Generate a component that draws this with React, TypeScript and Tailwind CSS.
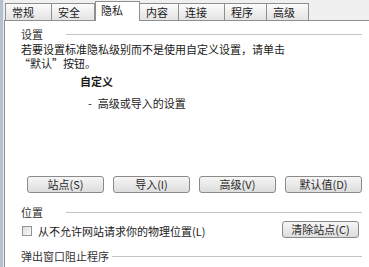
const tabs = [
  { label: "常规", w: "w-[47px]" },
  { label: "安全", w: "w-[43px]" },
  { label: "隐私", w: "w-[45px]", active: true },
  { label: "内容", w: "w-[39px]" },
  { label: "连接", w: "w-[46px]" },
  { label: "程序", w: "w-[42px]" },
  { label: "高级", w: "w-[42px]" },
];

function Btn({ children, className = "" }: { children: React.ReactNode; className?: string }) {
  return (
    <div
      className={`h-[17px] w-[77px] flex items-center justify-center rounded-[3px] border border-[#8a8a8a] bg-gradient-to-b from-[#f6f6f6] to-[#dddddd] text-[11px] leading-none text-[#2a2a2a] ${className}`}
    >
      {children}
    </div>
  );
}

function Section({ title, className = "", short = false }: { title: string; className?: string; short?: boolean }) {
  return (
    <div className={`flex items-center h-[14px] ${className}`}>
      <span className={`text-[#333] ${short ? "w-[45px]" : "mr-[3px]"}`}>{title}</span>
      <div className="flex-1 h-px bg-[#c4c4c4]" />
    </div>
  );
}

export default function App() {
  return (
    <div className="w-[369px] h-[267px] overflow-hidden flex bg-[#f0f0f0] text-[11px] leading-[14px] text-[#1a1a1a] font-['Noto_Sans_CJK_SC','Liberation_Sans',sans-serif]">
      <div className="w-[4px] bg-[#b4c2d0] border-r border-[#e4e9ee]" />
      <div className="flex-1 flex flex-col">
        {/* tab strip */}
        <div className="h-[20px] flex items-end pl-[1px]">
          {tabs.map((t) =>
            t.active ? (
              <div
                key={t.label}
                className={`${t.w} h-[20px] -mb-px relative z-10 bg-white border border-b-0 border-[#8e8f8f] flex items-start justify-start pl-[5px] pt-[1px]`}
              >
                {t.label}
              </div>
            ) : (
              <div
                key={t.label}
                className={`${t.w} h-[17px] border border-b-0 border-l-0 first:border-l border-[#8e8f8f] bg-gradient-to-b from-[#fbfbfb] to-[#e4e4e4] flex items-center justify-start pl-[6px]`}
              >
                {t.label}
              </div>
            )
          )}
        </div>

        {/* panel */}
        <div className="flex-1 bg-white border-t border-l border-[#8e8f8f] pl-[16px] pr-[7px] flex flex-col">
          <Section title="设置" short className="mt-[6px]" />
          <div className="mt-[1px]">若要设置标准隐私级别而不是使用自定义设置，请单击</div>
          <div className="-ml-[2px]">“默认”按钮。</div>
          <div className="mt-[4px] ml-[59px] font-bold">自定义</div>
          <div className="mt-[8px] ml-[67px] flex gap-[6px]">
            <span>-</span>
            <span>高级或导入的设置</span>
          </div>

          <div className="mt-[66px] ml-[6px] flex gap-[9px]">
            <Btn>站点(S)</Btn>
            <Btn>导入(I)</Btn>
            <Btn>高级(V)</Btn>
            <Btn>默认值(D)</Btn>
          </div>

          <Section title="位置" short className="mt-[12px]" />
          <div className="mt-[2px] flex items-end justify-between h-[17px]">
            <label className="flex items-center gap-[6px] ml-[1px]">
              <span className="w-[10px] h-[10px] border border-[#939393] bg-gradient-to-br from-[#dcdcdc] to-[#fbfbfb]" />
              <span>从不允许网站请求你的物理位置(L)</span>
            </label>
            <Btn className="mr-[3px] w-[76px]">清除站点(C)</Btn>
          </div>

          <Section title="弹出窗口阻止程序" className="mt-[11px]" />
        </div>
      </div>
    </div>
  );
}
